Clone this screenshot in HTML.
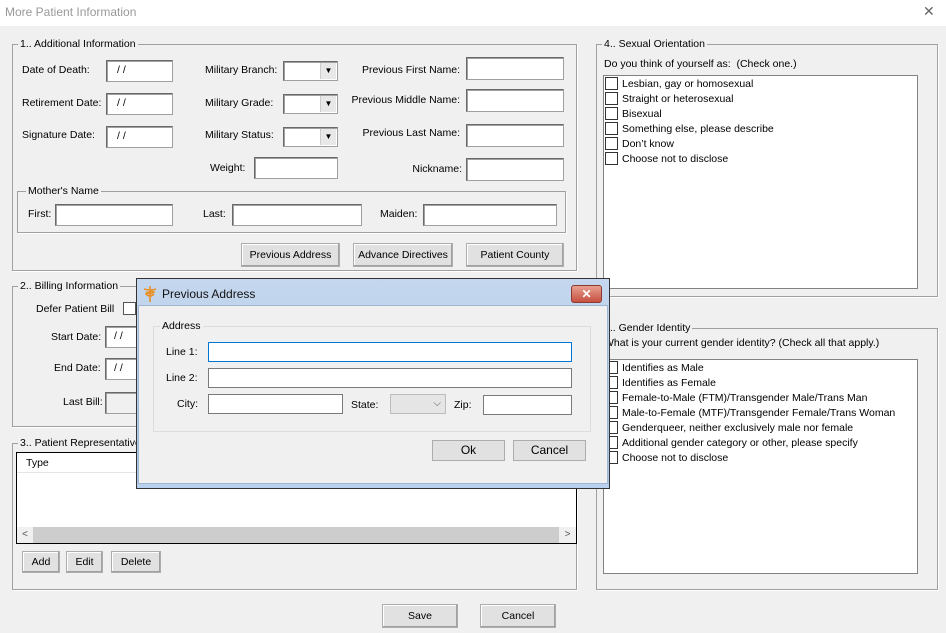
<!DOCTYPE html>
<html><head><meta charset="utf-8">
<style>
*{box-sizing:border-box;margin:0;padding:0}
body{width:946px;height:633px;overflow:hidden;background:#f0f0f0;font-family:"Liberation Sans",sans-serif;font-size:10.5px;color:#000;position:relative}
.a{position:absolute;white-space:nowrap;line-height:13px}
.in{position:absolute;background:#fff;border:1px solid #a0a0a0;border-top-color:#696969;border-left-color:#696969;box-shadow:inset 1px 1px 0 #a0a0a0}
.gb{position:absolute;border:1px solid #a0a0a0;box-shadow:1px 1px 0 #fff}
.gl{position:absolute;background:#f0f0f0;padding:0 2px;line-height:13px;white-space:nowrap}
.btn{position:absolute;background:#e1e1e1;border:1px solid #adadad;text-align:center;line-height:20px;box-shadow:inset -1px -1px 0 #a0a0a0,inset 1px 1px 0 #fff}
.cb{position:absolute;width:16px;height:14px;background:#fff;border:1px solid #333}
.dd{position:absolute;right:1px;top:1px;width:16px;bottom:1px;background:#e8e8e8;border-left:1px solid #ccc;font-size:8px;text-align:center;line-height:16px}
.li{position:absolute;line-height:15px;white-space:nowrap}
.li span{display:inline-block;width:13px;height:13px;border:1px solid #333;background:#fff;vertical-align:-3px;margin-right:4px}
</style></head><body>
<div class="a" style="left:0;top:0;width:946px;height:26px;background:#fff"></div>
<div class="a" style="left:5px;top:6px;font-size:12px;color:#999">More Patient Information</div>
<div class="a" style="left:923px;top:5px;font-size:14px;color:#666;font-weight:100">✕</div>

<!-- Group 1 -->
<div class="gb" style="left:12px;top:44px;width:565px;height:227px"></div>
<div class="gl" style="left:18px;top:38px">1.. Additional Information</div>
<div class="a" style="left:22px;top:64px">Date of Death:</div>
<div class="in" style="left:106px;top:60px;width:67px;height:22px;padding:3px 10px">/ /</div>
<div class="a" style="left:22px;top:97px">Retirement Date:</div>
<div class="in" style="left:106px;top:93px;width:67px;height:22px;padding:3px 10px">/ /</div>
<div class="a" style="left:22px;top:129px">Signature Date:</div>
<div class="in" style="left:106px;top:126px;width:67px;height:22px;padding:3px 10px">/ /</div>

<div class="a" style="left:205px;top:64px">Military Branch:</div>
<div class="in" style="left:283px;top:61px;width:55px;height:20px"><div class="dd">▼</div></div>
<div class="a" style="left:205px;top:97px">Military Grade:</div>
<div class="in" style="left:283px;top:94px;width:55px;height:20px"><div class="dd">▼</div></div>
<div class="a" style="left:205px;top:129px">Military Status:</div>
<div class="in" style="left:283px;top:127px;width:55px;height:20px"><div class="dd">▼</div></div>
<div class="a" style="left:210px;top:162px">Weight:</div>
<div class="in" style="left:254px;top:157px;width:84px;height:22px"></div>

<div class="a" style="left:340px;top:64px;width:120px;text-align:right">Previous First Name:</div>
<div class="in" style="left:466px;top:57px;width:98px;height:23px"></div>
<div class="a" style="left:340px;top:94px;width:120px;text-align:right">Previous Middle Name:</div>
<div class="in" style="left:466px;top:89px;width:98px;height:23px"></div>
<div class="a" style="left:340px;top:127px;width:120px;text-align:right">Previous Last Name:</div>
<div class="in" style="left:466px;top:124px;width:98px;height:23px"></div>
<div class="a" style="left:340px;top:163px;width:122px;text-align:right">Nickname:</div>
<div class="in" style="left:466px;top:158px;width:98px;height:23px"></div>

<div class="gb" style="left:17px;top:191px;width:549px;height:42px"></div>
<div class="gl" style="left:26px;top:185px">Mother's Name</div>
<div class="a" style="left:28px;top:208px">First:</div>
<div class="in" style="left:55px;top:204px;width:118px;height:22px"></div>
<div class="a" style="left:203px;top:208px">Last:</div>
<div class="in" style="left:232px;top:204px;width:130px;height:22px"></div>
<div class="a" style="left:380px;top:208px">Maiden:</div>
<div class="in" style="left:423px;top:204px;width:134px;height:22px"></div>

<div class="btn" style="left:241px;top:243px;width:99px;height:24px;line-height:22px">Previous Address</div>
<div class="btn" style="left:353px;top:243px;width:100px;height:24px;line-height:22px">Advance Directives</div>
<div class="btn" style="left:466px;top:243px;width:98px;height:24px;line-height:22px">Patient County</div>

<!-- Group 2 -->
<div class="gb" style="left:12px;top:286px;width:565px;height:141px"></div>
<div class="gl" style="left:18px;top:280px">2.. Billing Information</div>
<div class="a" style="left:36px;top:303px">Defer Patient Bill</div>
<div class="cb" style="left:123px;top:302px;width:13px;height:13px;border-color:#555"></div>
<div class="a" style="left:51px;top:331px">Start Date:</div>
<div class="in" style="left:105px;top:326px;width:60px;height:22px;padding:3px 8px">/ /</div>
<div class="a" style="left:54px;top:362px">End Date:</div>
<div class="in" style="left:105px;top:358px;width:60px;height:22px;padding:3px 8px">/ /</div>
<div class="a" style="left:63px;top:396px">Last Bill:</div>
<div class="in" style="left:105px;top:392px;width:60px;height:22px;background:#f0f0f0"></div>

<!-- Group 3 -->
<div class="gb" style="left:12px;top:443px;width:565px;height:147px"></div>
<div class="gl" style="left:18px;top:437px">3.. Patient Representatives</div>
<div class="a" style="left:16px;top:452px;width:561px;height:92px;background:#fff;border:1px solid #000"></div>
<div class="a" style="left:17px;top:453px;width:559px;height:20px;border-bottom:1px solid #e5e5e5;padding:4px 9px">Type</div>
<div class="a" style="left:17px;top:527px;width:559px;height:16px;background:#cdcdcd"></div>
<div class="a" style="left:17px;top:527px;width:16px;height:16px;background:#f0f0f0;text-align:center;font-size:10px;line-height:16px;color:#555">&lt;</div>
<div class="a" style="left:559px;top:527px;width:17px;height:16px;background:#f0f0f0;text-align:center;font-size:10px;line-height:16px;color:#555">&gt;</div>
<div class="btn" style="left:22px;top:551px;width:38px;height:22px">Add</div>
<div class="btn" style="left:66px;top:551px;width:37px;height:22px">Edit</div>
<div class="btn" style="left:111px;top:551px;width:50px;height:22px">Delete</div>

<!-- Group 4 -->
<div class="gb" style="left:596px;top:44px;width:342px;height:253px"></div>
<div class="gl" style="left:602px;top:38px">4.. Sexual Orientation</div>
<div class="a" style="left:604px;top:58px">Do you think of yourself as:&nbsp; (Check one.)</div>
<div class="a" style="left:603px;top:75px;width:315px;height:214px;background:#fff;border:1px solid #828282"></div>
<div class="li" style="left:605px;top:77px"><span></span>Lesbian, gay or homosexual</div>
<div class="li" style="left:605px;top:92px"><span></span>Straight or heterosexual</div>
<div class="li" style="left:605px;top:107px"><span></span>Bisexual</div>
<div class="li" style="left:605px;top:122px"><span></span>Something else, please describe</div>
<div class="li" style="left:605px;top:137px"><span></span>Don’t know</div>
<div class="li" style="left:605px;top:152px"><span></span>Choose not to disclose</div>

<!-- Group 5 -->
<div class="gb" style="left:596px;top:328px;width:342px;height:262px"></div>
<div class="gl" style="left:602px;top:322px">5.. Gender Identity</div>
<div class="a" style="left:604px;top:337px">What is your current gender identity? (Check all that apply.)</div>
<div class="a" style="left:603px;top:359px;width:315px;height:215px;background:#fff;border:1px solid #828282"></div>
<div class="li" style="left:605px;top:361px"><span></span>Identifies as Male</div>
<div class="li" style="left:605px;top:376px"><span></span>Identifies as Female</div>
<div class="li" style="left:605px;top:391px"><span></span>Female-to-Male (FTM)/Transgender Male/Trans Man</div>
<div class="li" style="left:605px;top:406px"><span></span>Male-to-Female (MTF)/Transgender Female/Trans Woman</div>
<div class="li" style="left:605px;top:421px"><span></span>Genderqueer, neither exclusively male nor female</div>
<div class="li" style="left:605px;top:436px"><span></span>Additional gender category or other, please specify</div>
<div class="li" style="left:605px;top:451px"><span></span>Choose not to disclose</div>

<div class="btn" style="left:382px;top:604px;width:76px;height:24px;line-height:22px">Save</div>
<div class="btn" style="left:480px;top:604px;width:76px;height:24px;line-height:22px">Cancel</div>

<!-- Dialog -->
<div class="a" style="left:136px;top:278px;width:474px;height:211px;border:1px solid #333;background:linear-gradient(#c4d7ee,#a9c4e6);"></div>
<div class="a" style="left:138px;top:305px;width:470px;height:179px;background:#f0f0f0;border:1px solid #9fb6d4"></div>
<div class="a" style="left:137px;top:484px;width:472px;height:4px;background:#b9d1ee"></div>
<svg class="a" style="left:142px;top:285px" width="16" height="18" viewBox="0 0 16 18"><path d="M8 1v16M2 4q6 2 12 0M4 7q4 3 8 0q-4-2-8 2q4 4 8 0" stroke="#e8912b" stroke-width="1.6" fill="none"/></svg>
<div class="a" style="left:162px;top:288px;font-size:12px;color:#111">Previous Address</div>
<div class="a" style="left:571px;top:285px;width:31px;height:18px;background:linear-gradient(#e8a090,#c75040);border:1px solid #8a3a30;border-radius:3px;color:#fff;text-align:center;font-weight:bold;font-size:12px;line-height:16px">✕</div>
<div class="a" style="left:153px;top:326px;width:438px;height:106px;border:1px solid #dcdcdc"></div>
<div class="gl" style="left:160px;top:320px">Address</div>
<div class="a" style="left:166px;top:346px">Line 1:</div>
<div class="a" style="left:208px;top:342px;width:364px;height:20px;background:#fff;border:1px solid #0078d7"></div>
<div class="a" style="left:166px;top:372px">Line 2:</div>
<div class="a" style="left:208px;top:368px;width:364px;height:20px;background:#fff;border:1px solid #7a7a7a"></div>
<div class="a" style="left:177px;top:398px">City:</div>
<div class="a" style="left:208px;top:394px;width:135px;height:20px;background:#fff;border:1px solid #7a7a7a"></div>
<div class="a" style="left:351px;top:399px">State:</div>
<div class="a" style="left:390px;top:394px;width:56px;height:20px;background:#e5e5e5;border:1px solid #bcbcbc;text-align:right;padding-right:4px;color:#555;font-size:10px;line-height:18px">⌵</div>
<div class="a" style="left:454px;top:399px">Zip:</div>
<div class="a" style="left:483px;top:395px;width:89px;height:20px;background:#fff;border:1px solid #7a7a7a"></div>
<div class="a" style="left:432px;top:440px;width:73px;height:21px;background:#e1e1e1;border:1px solid #adadad;text-align:center;line-height:19px;font-size:12px">Ok</div>
<div class="a" style="left:513px;top:440px;width:73px;height:21px;background:#e1e1e1;border:1px solid #adadad;text-align:center;line-height:19px;font-size:12px">Cancel</div>
</body></html>
